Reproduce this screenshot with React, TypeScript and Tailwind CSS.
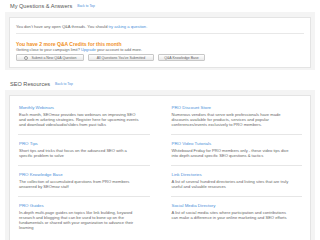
import React from "react";

const resources = [
  {
    title: "Monthly Webinars",
    lines: [
      "Each month, SEOmoz provides two webinars on improving SEO",
      "and web m arketing strategies. Register here for upcoming events",
      "and download video/audio/slides from past talks",
    ],
  },
  {
    title: "PRO Discount Store",
    lines: [
      "Numerous vendors that serve web professionals have made",
      "discounts available for products, services and popular",
      "conferences/events exclusively to PRO members.",
    ],
  },
  {
    title: "PRO Tips",
    lines: [
      "Short tips and tricks that focus on the advanced SEO with a",
      "specific problem to solve",
    ],
  },
  {
    title: "PRO Video Tutorials",
    lines: [
      "Whiteboard Friday for PRO members only - these video tips dive",
      "into depth around specific SEO questions & tactics",
    ],
  },
  {
    title: "PRO Knowledge Base",
    lines: [
      "The collection of accumulated questions from PRO members",
      "answered by SEOmoz staff",
    ],
  },
  {
    title: "Link Directories",
    lines: [
      "A list of several hundred directories and listing sites that are truly",
      "useful and valuable resources",
    ],
  },
  {
    title: "PRO Guides",
    lines: [
      "In-depth multi-page guides on topics like link building, keyword",
      "research and blogging that can be used to bone up on the",
      "fundamentals or shared with your organization to advance their",
      "learning",
    ],
  },
  {
    title: "Social Media Directory",
    lines: [
      "A list of social media sites where participation and contributions",
      "can make a difference in your online marketing and SEO efforts",
    ],
  },
];

function SectionHeading({ title }: { title: string }) {
  return (
    <div className="flex items-center gap-[5px] pl-[10px] h-[12px]">
      <h2 className="text-[5.6px] leading-[6px] text-[#555]">{title}</h2>
      <a className="text-[3.4px] leading-[4px] text-[#4a90d9]">Back to Top</a>
    </div>
  );
}

function Button({ label, icon, width }: { label: string; icon?: boolean; width: string }) {
  return (
    <button
      className={`${width} flex items-center justify-center gap-[4px] h-[7px] border border-[#c8c8c8] rounded-[1px] bg-gradient-to-b from-white to-[#e8e8e8] text-[3.5px] leading-[4px] text-[#666]`}
    >
      {icon && <span className="w-[4px] h-[4px] rounded-full border border-[#999]" />}
      {label}
    </button>
  );
}

export default function App() {
  return (
    <div className="w-[320px] h-[240px] overflow-hidden bg-white font-['Liberation_Sans',Arial,sans-serif]">
      <SectionHeading title="My Questions & Answers" />

      {/* Q&A panel */}
      <div className="mx-[5px] bg-[#f4f4f4] px-[4px] pt-[5px] pb-[2px]">
        <div className="bg-white border border-[#e4e4e4] px-[6px] pt-[6px] pb-[6px]">
          <div className="pr-[1px] pb-[4px] border-b border-[#e8e8e8] text-[4.1px] leading-[5px] text-[#666]">
            You don't have any open Q&A threads. You should{" "}
            <a className="text-[#4a90d9]">try asking a question.</a>
          </div>
          <div className="mt-[7px] text-[5px] leading-[6px] font-bold text-[#f0901e]">
            You have 2 more Q&A Credits for this month
          </div>
          <div className="text-[3.9px] leading-[5px] text-[#666]">
            Getting close to your campaign limit?{" "}
            <a className="text-[#4a90d9]">Upgrade</a> your account to add more.
          </div>
          <div className="flex gap-[4px] mt-[2px]">
            <Button label="Submit a New Q&A Question" icon width="w-[68px]" />
            <Button label="All Questions You've Submitted" width="w-[66px]" />
            <Button label="Q&A Knowledge Base" width="w-[47px]" />
          </div>
        </div>
      </div>

      <div className="h-[8px]" />
      <SectionHeading title="SEO Resources" />

      {/* Resources panel */}
      <div className="mx-[5px] bg-[#f4f4f4] px-[4px] pt-[5px]">
        <div className="bg-white border border-[#e4e4e4] px-[8px] pt-[3px] pb-[10px]">
          <div className="grid grid-cols-2 gap-x-[21px]">
            {resources.map((r, i) => (
              <div
                key={r.title}
                className={`pl-[1px] pt-[6px] pb-[7px] ${i < 6 ? "border-b border-[#e6e6e6]" : ""}`}
              >
                <div className="text-[4.4px] leading-[6px] text-[#4a90d9]">{r.title}</div>
                <div className="mt-[1px] text-[4.1px] leading-[5px] text-[#666] whitespace-nowrap">
                  {r.lines.map((l) => (
                    <div key={l}>{l}</div>
                  ))}
                </div>
              </div>
            ))}
          </div>
        </div>
      </div>
    </div>
  );
}
